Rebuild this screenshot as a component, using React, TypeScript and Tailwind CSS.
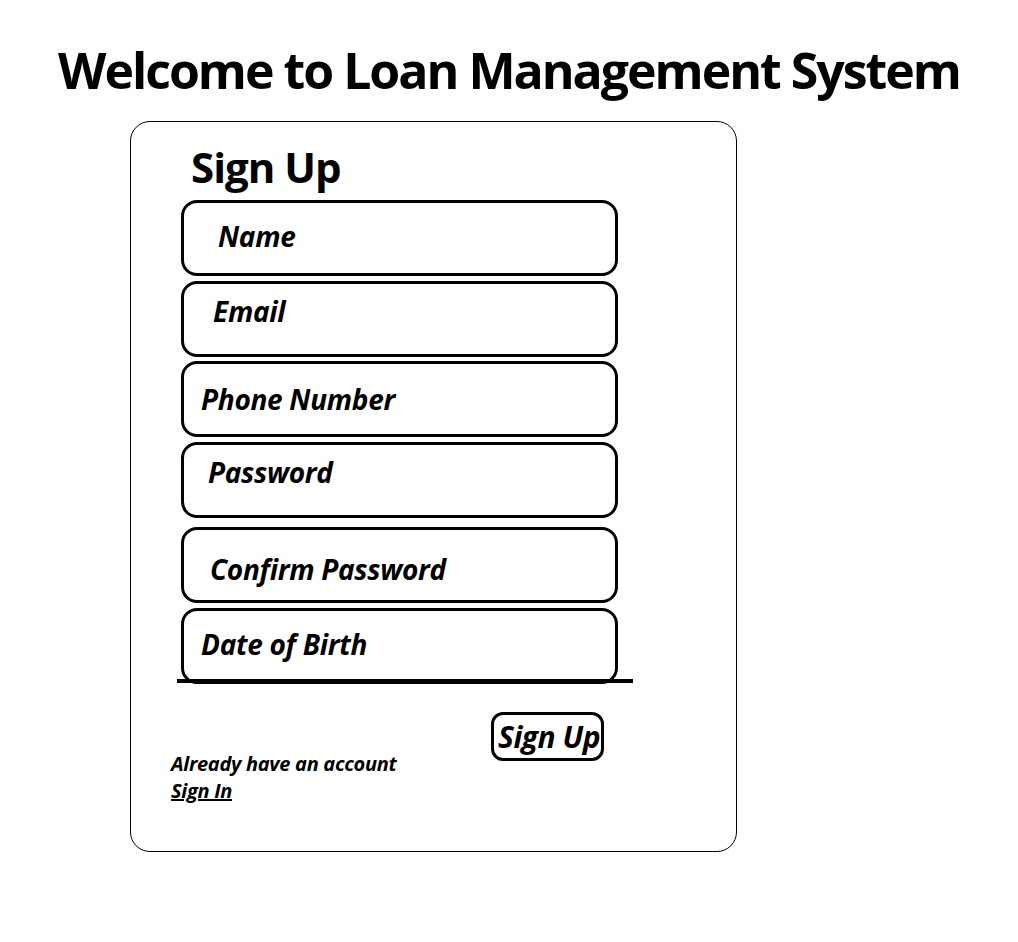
const fields = [
  { label: "Name", mt: "mt-[8px]", pl: "pl-[34px]", pt: "pt-[16px]" },
  { label: "Email", mt: "mt-[5px]", pl: "pl-[29px]", pt: "pt-[10px]" },
  { label: "Phone Number", mt: "mt-[4px]", pl: "pl-[17px]", pt: "pt-[18px]" },
  { label: "Password", mt: "mt-[5px]", pl: "pl-[24px]", pt: "pt-[10px]" },
  { label: "Confirm Password", mt: "mt-[9px]", pl: "pl-[26px]", pt: "pt-[22px]" },
  { label: "Date of Birth", mt: "mt-[5px]", pl: "pl-[17px]", pt: "pt-[16px]" },
];

const App = () => {
  return (
    <div className="w-[1018px] h-[942px] bg-white text-black font-['Open_Sans',sans-serif]">
      <h1 className="pt-[38px] text-center text-[50px] leading-[64px] font-bold tracking-[-2px]">
        Welcome to Loan Management System
      </h1>
      <div className="ml-[130px] mt-[19px] w-[607px] h-[731px] border border-black rounded-[20px] flex flex-col">
        <h2 className="ml-[60px] mt-[20px] text-[42px] leading-[50px] font-bold tracking-[-1px]">
          Sign Up
        </h2>
        <div className="ml-[50px] flex flex-col">
          {fields.map((f) => (
            <div
              key={f.label}
              className={`${f.mt} w-[437px] h-[76px] border-[3px] border-black rounded-[16px] ${f.pl} ${f.pt}`}
            >
              <span className="text-[28px] leading-[34px] font-bold italic tracking-[-0.3px]">
                {f.label}
              </span>
            </div>
          ))}
          <div className="-ml-[4px] -mt-[5px] w-[456px] h-[4px] bg-black" />
        </div>
        <div className="ml-[40px] mt-[29px] w-[433px] flex justify-between">
          <div className="pt-[38px] flex flex-col text-[20px] leading-[27px] font-bold italic tracking-[-0.3px]">
            <span>Already have an account</span>
            <a href="#" className="underline w-fit">Sign In</a>
          </div>
          <button className="w-[113px] h-[49px] border-[3px] border-black rounded-[12px] pl-[4px] text-left text-[30px] leading-[40px] font-bold italic tracking-[-0.5px] whitespace-nowrap overflow-visible">
            Sign Up
          </button>
        </div>
      </div>
    </div>
  );
};

export default App;
